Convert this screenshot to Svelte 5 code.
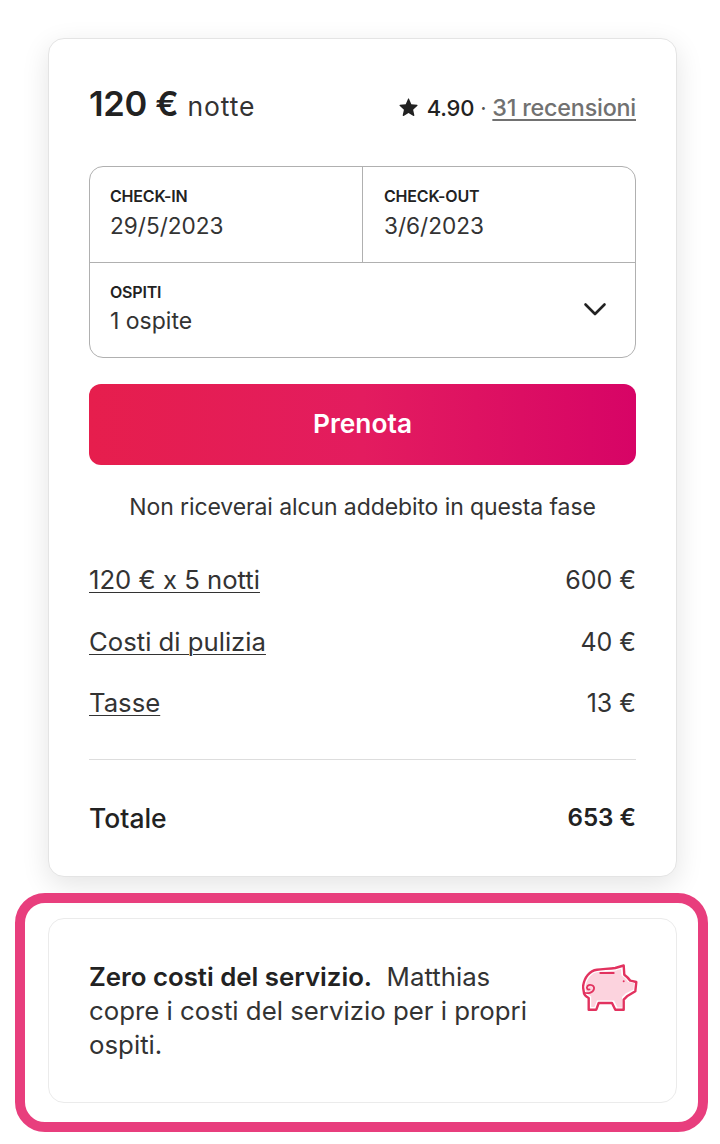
<script>
	const fees = [
		{ label: "120 € x 5 notti", amount: "600 €" },
		{ label: "Costi di pulizia", amount: "40 €" },
		{ label: "Tasse", amount: "13 €" },
	];
</script>

<div class="page">
	<section class="card booking">
		<header class="head">
			<div class="price"><strong>120 €</strong><span>notte</span></div>
			<div class="rating">
				<svg class="star" viewBox="0 0 32 32" aria-hidden="true">
					<path d="M15.1 1.6 11.3 10.5 1.7 11.4c-.9.1-1.2 1.2-.6 1.8l7.2 6.4-2.1 9.5c-.2.9.8 1.6 1.6 1.1l8.2-5 8.3 5c.8.5 1.8-.2 1.6-1.1l-2.1-9.5 7.2-6.4c.6-.6.3-1.7-.6-1.8l-9.6-.9-3.8-8.9c-.4-.8-1.5-.8-1.9 0z" />
				</svg>
				<span class="score">4.90</span>
				<span class="dot">·</span>
				<span class="reviews">31 recensioni</span>
			</div>
		</header>

		<div class="picker">
			<div class="dates">
				<div class="field">
					<div class="field-label">CHECK-IN</div>
					<div class="field-value">29/5/2023</div>
				</div>
				<div class="field second">
					<div class="field-label">CHECK-OUT</div>
					<div class="field-value">3/6/2023</div>
				</div>
			</div>
			<div class="guests">
				<div>
					<div class="field-label">OSPITI</div>
					<div class="field-value">1 ospite</div>
				</div>
				<svg class="chevron" viewBox="0 0 24 24" aria-hidden="true">
					<path d="M2.5 7.5 12 17l9.5-9.5" />
				</svg>
			</div>
		</div>

		<button class="book" type="button">Prenota</button>
		<p class="notice">Non riceverai alcun addebito in questa fase</p>

		<ul class="fees">
			{#each fees as fee}
				<li class="fee">
					<span class="fee-label">{fee.label}</span>
					<span class="fee-amount">{fee.amount}</span>
				</li>
			{/each}
		</ul>

		<div class="total">
			<span>Totale</span>
			<span class="total-amount">653 €</span>
		</div>
	</section>

	<div class="highlight">
		<section class="card promo">
			<p class="promo-text"><strong>Zero costi del servizio.</strong>&nbsp; Matthias copre i costi del servizio per i propri ospiti.</p>
			<svg class="piggy" viewBox="0 0 56 48" aria-hidden="true">
				<path class="piggy-outline" d="M1 23C2 13 8 6.5 15 5.7c6-.8 12-.8 18.3-1.7L41.7 1.5l.6 9.2c2.5 1.8 4.500 3.800 6 6L54.300 18l-1 9.300L45 32.300l-3.300 3.400v10h-8.400L30 39H16.700l-2.400 6.700H6.700V34c-3-1.500-5-3.800-5-6.700z" />
				<path class="piggy-fill" d="M3.500 23C4.500 14.500 10 8.500 16 8c6-.5 12-.5 18-1.500l5-1.500.5 6.500c3 1.800 5 3.800 6.500 6.500l6 1-.5 6.500-8 4-3.500 3.500v10.500h-4.500L32 36.500H15l-2.500 6.500H9.200V32.500c-3.500-1.500-5.700-4.500-5.700-9.500z" />
				<path class="piggy-line" d="M18.300 9h13.400" />
				<path class="piggy-line curl" d="M2 28.500c3.500 1.500 9 .5 10-3.500.8-3.500-4-5.500-6.500-3-1.500 2 0 4 2 3.500" />
				<circle class="piggy-eye" cx="41.700" cy="17.300" r="1" />
			</svg>
		</section>
	</div>
</div>

<style>
	:global(body) {
		margin: 0;
		background: #fff;
	}
	.page {
		width: 720px;
		height: 1144px;
		box-sizing: border-box;
		padding-top: 38px;
		font-family: Inter, "Liberation Sans", sans-serif;
		color: #222;
		overflow: hidden;
	}
	.card {
		box-sizing: border-box;
		width: 629px;
		background: #fff;
		border: 1px solid #e4e4e4;
		border-radius: 16px;
	}
	.booking {
		height: 839px;
		margin-left: 48px;
		padding: 0 40px;
		box-shadow: 0 8px 28px rgba(0, 0, 0, 0.11);
	}
	.head {
		display: flex;
		align-items: baseline;
		justify-content: space-between;
		padding-top: 44px;
		height: 127px;
		box-sizing: border-box;
	}
	.price strong {
		font-size: 34.5px;
		font-weight: 600;
		letter-spacing: -0.3px;
	}
	.price span {
		font-size: 26.5px;
		letter-spacing: 0.9px;
		margin-left: 9px;
		color: #333;
	}
	.rating {
		display: flex;
		align-items: baseline;
		font-size: 22px;
		letter-spacing: -0.2px;
	}
	.star {
		width: 19px;
		height: 19px;
		fill: #222;
		margin-right: 9px;
		align-self: center;
	}
	.score {
		font-weight: 500;
	}
	.dot {
		margin: 0 6px;
		color: #555;
	}
	.reviews {
		color: #717171;
		font-weight: 500;
		font-size: 23.3px;
		text-decoration: underline;
		text-underline-offset: 3px;
	}
	.picker {
		border: 1px solid #b0b0b0;
		border-radius: 14px;
	}
	.dates {
		display: flex;
		height: 95px;
		border-bottom: 1px solid #b0b0b0;
	}
	.field {
		box-sizing: border-box;
		width: 272px;
		padding: 19px 20px 0;
	}
	.second {
		flex: 1;
		padding-left: 21px;
		border-left: 1px solid #b0b0b0;
	}
	.field-label {
		font-size: 16px;
		font-weight: 600;
		line-height: 20px;
		letter-spacing: -0.2px;
	}
	.field-value {
		font-size: 22.6px;
		line-height: 32px;
		margin-top: 4px;
		color: #333;
	}
	.guests .field-value {
		margin-top: 3px;
		font-size: 23px;
	}
	.guests {
		display: flex;
		align-items: center;
		justify-content: space-between;
		box-sizing: border-box;
		height: 94px;
		padding: 0 28px 2px 20px;
	}
	.chevron {
		width: 24px;
		height: 24px;
		fill: none;
		stroke: #222;
		stroke-width: 2.6;
		stroke-linecap: round;
		stroke-linejoin: round;
	}
	.book {
		display: block;
		width: 100%;
		height: 81px;
		margin-top: 26px;
		padding: 0 0 2px;
		border: none;
		border-radius: 12px;
		background: linear-gradient(90deg, #e61e4d 0%, #e31c5f 50%, #d70466 100%);
		color: #fff;
		font-family: inherit;
		font-size: 26.3px;
		font-weight: 600;
	}
	.notice {
		margin: 26px 0 0;
		text-align: center;
		font-size: 23px;
		line-height: 32px;
		letter-spacing: -0.1px;
		color: #333;
	}
	.fees {
		list-style: none;
		margin: 41px 0 0;
		padding: 0 0 40px;
		border-bottom: 1px solid #ddd;
	}
	.fee {
		display: flex;
		justify-content: space-between;
		line-height: 32px;
		margin-top: 29.5px;
		color: #333;
	}
	.fee:first-child {
		margin-top: 0;
	}
	.fee-label {
		font-size: 25.7px;
		text-decoration: underline;
		text-decoration-thickness: 1px;
		text-underline-offset: 3px;
	}
	.fee-amount {
		font-size: 25px;
	}
	.total {
		display: flex;
		justify-content: space-between;
		margin-top: 42px;
		font-size: 26.5px;
		line-height: 32px;
		font-weight: 500;
	}
	.total-amount {
		font-size: 24.2px;
		font-weight: 600;
	}
	.highlight {
		box-sizing: border-box;
		width: 693px;
		height: 239px;
		margin: 16px 0 0 15px;
		border: 10px solid #e83e7d;
		border-radius: 30px;
		padding: 15px 0 0 23px;
	}
	.promo {
		display: flex;
		justify-content: space-between;
		align-items: flex-start;
		height: 185px;
		padding: 41px 38px 0 40px;
		border-color: #ebebeb;
	}
	.promo-text {
		margin: 0;
		width: 450px;
		font-size: 25.8px;
		line-height: 34px;
		color: #333;
	}
	.promo-text strong {
		font-weight: 600;
		color: #222;
	}
	.piggy {
		width: 56px;
		height: 48px;
		margin-top: 4px;
	}
	.piggy-outline {
		fill: #fff;
		stroke: #e2325f;
		stroke-width: 2.4;
		stroke-linejoin: round;
	}
	.piggy-fill {
		fill: #fcd3de;
	}
	.piggy-line {
		fill: none;
		stroke: #e2325f;
		stroke-width: 2;
		stroke-linecap: round;
	}
	.curl {
		stroke-width: 1.8;
	}
	.piggy-eye {
		fill: #e2325f;
	}
</style>
